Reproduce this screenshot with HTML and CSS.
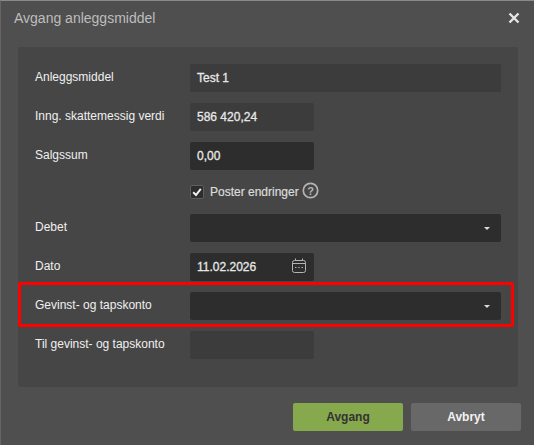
FILE: index.html
```html
<!DOCTYPE html>
<html lang="nb">
<head>
    <meta charset="UTF-8">
    <meta name="viewport" content="width=device-width, initial-scale=1.0">
    <title>Avgang anleggsmiddel</title>
    <link rel="stylesheet" href="styles.css">
</head>
<body>
    <div class="dialog">
        <div class="dialog-header">
            <h1>Avgang anleggsmiddel</h1>
            <svg class="close-icon" width="12" height="12" viewBox="0 0 12 12">
                <path d="M1.5 1.5 L10.5 10.5 M10.5 1.5 L1.5 10.5" stroke="#e6e6e6" stroke-width="2.4" fill="none"/>
            </svg>
        </div>

        <div class="panel">
            <div class="row">
                <label>Anleggsmiddel</label>
                <div class="field wide readonly">Test 1</div>
            </div>
            <div class="row">
                <label>Inng. skattemessig verdi</label>
                <div class="field small readonly">586 420,24</div>
            </div>
            <div class="row">
                <label>Salgssum</label>
                <div class="field small">0,00</div>
            </div>

            <div class="check-row">
                <span class="checkbox">
                    <svg width="10" height="10" viewBox="0 0 10 10">
                        <path d="M1.2 5.2 L4 8 L8.8 1.8" stroke="#f0f0f0" stroke-width="2" fill="none"/>
                    </svg>
                </span>
                <span class="check-label">Poster endringer</span>
                <svg class="help-icon" width="17" height="17" viewBox="0 0 17 17">
                    <circle cx="8.5" cy="8.5" r="7.2" stroke="#b4b4b4" stroke-width="1.7" fill="none"/>
                    <text x="8.5" y="12.5" text-anchor="middle" class="help-mark">?</text>
                </svg>
            </div>

            <div class="row">
                <label>Debet</label>
                <div class="field wide"><span class="caret"></span></div>
            </div>
            <div class="row">
                <label>Dato</label>
                <div class="field small">
                    11.02.2026
                    <svg class="date-icon" width="15" height="15" viewBox="0 0 15 15">
                        <rect x="0.5" y="2.5" width="13" height="12" rx="2" stroke="#b4b4b4" fill="none"/>
                        <path d="M0.5 5.5 H13.5 M3.5 0.5 V3 M10.5 0.5 V3" stroke="#b4b4b4" fill="none"/>
                        <path d="M3 9.5 H4.5 M6.3 9.5 H7.7 M9.5 9.5 H11" stroke="#b4b4b4" fill="none"/>
                    </svg>
                </div>
            </div>
            <div class="row">
                <label>Gevinst- og tapskonto</label>
                <div class="field wide"><span class="caret"></span></div>
            </div>
            <div class="row">
                <label>Til gevinst- og tapskonto</label>
                <div class="field small readonly"></div>
            </div>

            <div class="highlight"></div>
        </div>

        <div class="dialog-footer">
            <button class="btn-primary">Avgang</button>
            <button class="btn-secondary">Avbryt</button>
        </div>
    </div>
</body>
</html>
```

FILE: styles.css
```css
* {
    margin: 0;
    padding: 0;
    box-sizing: border-box;
    font-family: 'Liberation Sans', Arial, sans-serif;
}

body {
    background-color: #4f4f4f;
    width: 534px;
    height: 445px;
    overflow: hidden;
}

.dialog {
    height: 445px;
    padding-left: 1px;
    border-top: 1px solid #8a8a8a;
    border-left: 1px solid #666;
    background-color: #4f4f4f;
}

.dialog-header {
    display: flex;
    justify-content: space-between;
    align-items: center;
    height: 46px;
    padding: 0 14px 12px 12px;
}

.dialog-header h1 {
    font-size: 14px;
    font-weight: normal;
    color: #bdbdbd;
}

.panel {
    position: relative;
    width: 500px;
    height: 340px;
    margin-left: 16px;
    padding: 17px 17px 0;
    background-color: #464646;
    border-radius: 2px;
}

.row {
    display: flex;
    align-items: center;
    margin-bottom: 11px;
}

.row label {
    width: 155px;
    padding-bottom: 3px;
    font-size: 12px;
    color: #f0f0f0;
}

.field {
    display: flex;
    align-items: center;
    justify-content: space-between;
    height: 28px;
    padding: 0 7px;
    background-color: #2d2d2d;
    border-radius: 2px;
    font-size: 12px;
    color: #e8e8e8;
    -webkit-text-stroke: 0.3px #e8e8e8;
}

.field.readonly {
    background-color: #3c3c3c;
}

.wide {
    width: 311px;
}

.small {
    width: 124px;
}

.caret {
    margin-left: auto;
    margin-right: 4px;
    border-left: 3px solid transparent;
    border-right: 3px solid transparent;
    border-top: 3px solid #dcdcdc;
}

.date-icon {
    margin-bottom: 3px;
}

.check-row {
    display: flex;
    align-items: center;
    height: 22px;
    margin-bottom: 11px;
    padding-left: 155px;
}

.checkbox {
    display: flex;
    align-items: center;
    justify-content: center;
    width: 14px;
    height: 14px;
    margin-right: 6px;
    background-color: #2d2d2d;
    border: 1px solid #5e5e5e;
    border-radius: 2px;
}

.check-label {
    font-size: 12px;
    color: #dcdcdc;
    -webkit-text-stroke: 0.2px #dcdcdc;
}

.help-icon {
    margin: 0 0 4px 3px;
}

.help-mark {
    font-size: 11px;
    font-weight: bold;
    fill: #b4b4b4;
}

.highlight {
    position: absolute;
    left: 0;
    top: 235px;
    width: 496px;
    height: 45px;
    border: 3px solid #ff0000;
    border-radius: 2px;
}

.dialog-footer {
    display: flex;
    justify-content: flex-end;
    gap: 8px;
    padding: 16px 13px 0 0;
}

.dialog-footer button {
    width: 110px;
    height: 28px;
    border: none;
    border-radius: 2px;
    font-size: 12px;
    font-weight: bold;
}

.btn-primary {
    background-color: #87a94d;
    color: #333;
}

.btn-secondary {
    background-color: #686868;
    color: #f2f2f2;
}
```
